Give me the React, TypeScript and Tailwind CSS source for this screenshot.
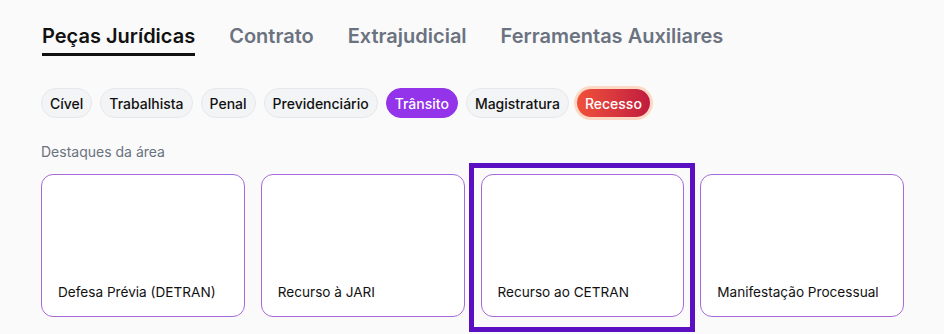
import { useState } from 'react';

const tabs = ['Peças Jurídicas', 'Contrato', 'Extrajudicial', 'Ferramentas Auxiliares'];

const areas = ['Cível', 'Trabalhista', 'Penal', 'Previdenciário', 'Trânsito', 'Magistratura'];

const destaques = ['Defesa Prévia (DETRAN)', 'Recurso à JARI', 'Recurso ao CETRAN', 'Manifestação Processual'];

export default function App() {
  const [tab, setTab] = useState('Peças Jurídicas');
  const [area, setArea] = useState('Trânsito');
  const selected = 'Recurso ao CETRAN';

  return (
    <div className="min-h-screen bg-[#fafafa] font-['Inter',sans-serif] text-[#111]">
      <div className="pl-[41px] pr-10 pt-[24px]">
        <nav className="flex gap-[34px] pl-px">
          {tabs.map((t) => (
            <button
              key={t}
              onClick={() => setTab(t)}
              className={`pb-[5px] text-[20px] leading-[24px] font-semibold border-b-[3px] ${
                tab === t ? 'text-[#111] border-[#111]' : 'text-[#6b7280] border-transparent'
              }`}
            >
              {t}
            </button>
          ))}
        </nav>

        <div className="mt-[32px] flex gap-2">
          {areas.map((a) => (
            <button
              key={a}
              onClick={() => setArea(a)}
              className={`h-[30px] px-2 rounded-full border text-[14px] font-medium ${
                area === a
                  ? 'bg-[#9333ea] border-[#9333ea] text-white'
                  : 'bg-[#f3f4f6] border-[#e5e7eb] text-[#111]'
              }`}
            >
              {a}
            </button>
          ))}
          <button className="h-[28px] mt-px px-2 rounded-full text-[14px] font-medium text-white bg-gradient-to-r from-[#f1503a] to-[#c01a3e] ring-[3px] ring-[#fcd9c4]">
            Recesso
          </button>
        </div>

        <p className="mt-[24px] text-[14px] leading-[20px] text-[#6b7280]">Destaques da área</p>

        <div className="mt-[12px] grid grid-cols-4 gap-4">
          {destaques.map((d) => (
            <div
              key={d}
              className="relative h-[143px] bg-white rounded-xl border border-[#a66bd8] flex items-end px-4 pb-[14px]"
            >
              <span className="text-[13.6px] leading-[20px] text-[#111]">{d}</span>
              {d === selected && (
                <div className="absolute -left-[13px] -right-[12px] -top-[12px] -bottom-[16px] border-[5px] border-[#5b0fc2] pointer-events-none" />
              )}
            </div>
          ))}
        </div>
      </div>
    </div>
  );
}
